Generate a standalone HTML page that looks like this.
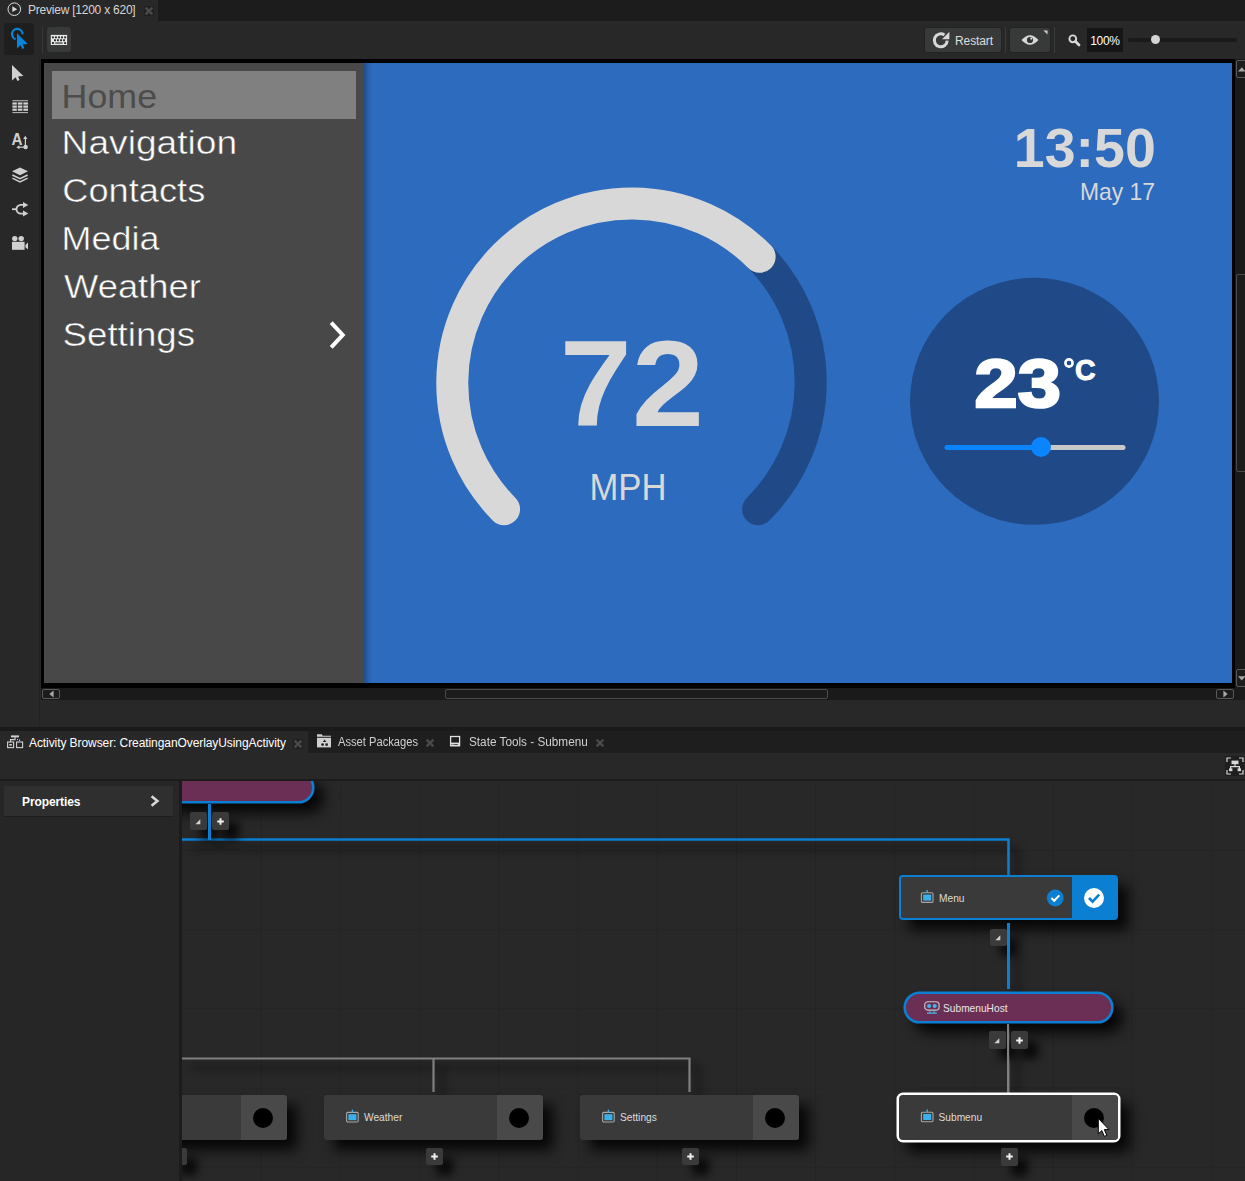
<!DOCTYPE html>
<html>
<head>
<meta charset="utf-8">
<title>Preview</title>
<style>
html,body{margin:0;padding:0;}
body{width:1245px;height:1181px;overflow:hidden;background:#282828;position:relative;font-family:"Liberation Sans",sans-serif;font-size:12px;color:#dcdcdc;}
.a{position:absolute;}
.t{position:absolute;white-space:nowrap;line-height:1;}
svg{position:absolute;overflow:visible;}
.sbtn{position:absolute;background:#3a3a3a;border-radius:2px;box-shadow:10px 10px 9px rgba(0,0,0,.75);}
.node{position:absolute;width:219px;height:45px;background:#3a3a3a;border-radius:3px;box-shadow:10px 10px 13px rgba(0,0,0,.85);}
.node .r{position:absolute;right:0;top:0;width:46px;height:45px;background:#494949;border-radius:0 3px 3px 0;}
.node .c{position:absolute;right:14px;top:12.5px;width:20px;height:20px;border-radius:50%;background:#000;}
.node .lbl{position:absolute;left:40px;top:17.5px;font-size:10.2px;line-height:1;color:#dcdcdc;white-space:nowrap;}
.pill{position:absolute;width:205px;height:27px;border-radius:14px;background:#6b2f55;box-shadow:0 0 0 2.6px #0b7fd1,10px 10px 13px 2px rgba(0,0,0,.85);}
</style>
</head>
<body>

<!-- ===== top tab bar ===== -->
<div class="a" style="left:0;top:0;width:1245px;height:21px;background:#1c1c1c;"></div>
<div class="a" style="left:0;top:0;width:158px;height:21px;background:#282828;"></div>
<svg style="left:7px;top:2px" width="15" height="15" viewBox="0 0 15 15"><circle cx="7.3" cy="7.2" r="6.3" fill="none" stroke="#e0e0e0" stroke-width="1"/><path d="M5.3 4.3 L10.2 7.2 L5.3 10.1 Z" fill="#d8d8d8"/></svg>
<div class="t" style="left:28px;top:4px;font-size:12px;color:#d6d6d6;letter-spacing:-0.23px;">Preview [1200 x 620]</div>
<div class="a" style="left:144px;top:6px;width:10px;height:10px;background:#202020;"></div>
<svg style="left:145px;top:7px" width="8" height="8" viewBox="0 0 8 8"><path d="M0.6 0.6 L7.4 7.4 M7.4 0.6 L0.6 7.4" stroke="#4a4a4a" stroke-width="2.3"/></svg>

<!-- ===== top toolbar ===== -->
<div class="a" style="left:4px;top:23px;width:30px;height:32px;background:#1e1e1e;border-radius:3px;"></div>
<div class="a" style="left:42px;top:27px;width:1px;height:26px;background:#3a3a3a;"></div>
<div class="a" style="left:47px;top:27px;width:24px;height:25px;background:#383a3a;border-radius:3px;"></div>

<!-- interact tool icon (blue) -->
<svg style="left:4px;top:23px" width="30" height="32" viewBox="0 0 30 32">
  <path d="M11.6 16.2 A5.3 5.3 0 1 1 18.6 11.2" fill="none" stroke="#0a84d8" stroke-width="2.2"/>
  <path d="M13 10.3 L13 25.6 L16.6 22.3 L18.3 25.9 L20.4 24.9 L18.8 21.5 L23.8 21 Z" fill="#0a84d8"/>
</svg>
<!-- keyboard icon -->
<svg style="left:47px;top:27px" width="24" height="25" viewBox="0 0 24 25">
  <rect x="3.8" y="7.9" width="16.3" height="10.1" fill="#e8e8e8"/>
  <g fill="#252525">
    <rect x="5" y="9.4" width="1.9" height="1.9"/><rect x="8" y="9.4" width="1.9" height="1.9"/><rect x="11.1" y="9.4" width="1.9" height="1.9"/><rect x="14.1" y="9.4" width="1.9" height="1.9"/><rect x="17.2" y="9.4" width="1.9" height="1.9"/>
    <rect x="7" y="12.3" width="1.9" height="1.9"/><rect x="10" y="12.3" width="1.9" height="1.9"/><rect x="13.1" y="12.3" width="1.9" height="1.9"/><rect x="16.1" y="12.3" width="1.9" height="1.9"/>
    <rect x="5" y="15.1" width="1.9" height="1.9"/><rect x="8.2" y="15.5" width="7.5" height="1.1"/><rect x="17.2" y="15.1" width="1.9" height="1.9"/>
  </g>
</svg>

<!-- right toolbar -->
<div class="a" style="left:925px;top:28px;width:76px;height:24px;background:#383a3a;border-radius:2px;box-shadow:0 0 0 1px #222323;"></div>
<svg style="left:930px;top:30px" width="22" height="20" viewBox="930 30 22 20">
  <path d="M947.2 40.6 A6.45 6.45 0 1 1 944.4 35" fill="none" stroke="#d8d8d8" stroke-width="3"/>
  <path d="M949.4 31.7 V39.3 H942 Z" fill="#d8d8d8"/>
</svg>
<div class="t" style="left:955px;top:35px;font-size:12px;color:#dedede;letter-spacing:-0.1px;">Restart</div>
<div class="a" style="left:1005px;top:27px;width:1px;height:26px;background:#3a3a3a;"></div>
<div class="a" style="left:1010px;top:28px;width:40px;height:24px;background:#383a3a;border-radius:2px;box-shadow:0 0 0 1px #222323;"></div>
<svg style="left:1019px;top:33px" width="22" height="14" viewBox="0 0 22 14">
  <path d="M2.5 7 Q11 -2.5 19.5 7 Q11 16.5 2.5 7 Z" fill="#d8d8d8"/>
  <circle cx="11" cy="7" r="3.1" fill="#333535"/>
  <circle cx="12.3" cy="5.6" r="1.1" fill="#d8d8d8"/>
</svg>
<svg style="left:1043px;top:30px" width="5" height="5" viewBox="0 0 5 5"><path d="M0.5 0.5 H4.5 V4.5 Z" fill="#d0d0d0"/></svg>
<div class="a" style="left:1054px;top:27px;width:1px;height:26px;background:#3a3a3a;"></div>
<svg style="left:1067px;top:33px" width="14" height="14" viewBox="0 0 14 14">
  <circle cx="5.8" cy="5.8" r="3.4" fill="none" stroke="#d8d8d8" stroke-width="1.9"/>
  <path d="M8.6 8.6 L12 12" stroke="#d8d8d8" stroke-width="2.8" stroke-linecap="round"/>
</svg>
<div class="a" style="left:1087px;top:28px;width:36px;height:24px;background:#161616;"></div>
<div class="t" style="left:1087px;top:35px;width:36px;text-align:center;font-size:12px;color:#ffffff;letter-spacing:-0.3px;">100%</div>
<div class="a" style="left:1128px;top:38px;width:109px;height:4px;background:#1a1a1a;border-radius:2px;"></div>
<div class="a" style="left:1150.5px;top:35px;width:9px;height:9px;background:#d4d4d4;border-radius:50%;"></div>

<!-- ===== left tool column ===== -->
<svg style="left:0;top:59px" width="40" height="200" viewBox="0 59 40 200">
  <!-- arrow -->
  <path d="M12 65 L12 80.5 L15.7 77.3 L17.4 81 L19.6 80 L18 76.4 L23.4 76 Z" fill="#d0d0d0"/>
  <!-- grid -->
  <g fill="#d0d0d0">
    <rect x="12.4" y="100.3" width="15.6" height="0.9"/>
    <rect x="12.4" y="112.2" width="15.6" height="0.9"/>
    <rect x="12.4" y="102.4" width="4.4" height="2.2"/><rect x="17.8" y="102.4" width="4.6" height="2.2"/><rect x="23.4" y="102.4" width="4.6" height="2.2"/>
    <rect x="12.4" y="105.5" width="4.4" height="2.2"/><rect x="17.8" y="105.5" width="4.6" height="2.2"/><rect x="23.4" y="105.5" width="4.6" height="2.2"/>
    <rect x="12.4" y="108.6" width="4.4" height="2.2"/><rect x="17.8" y="108.6" width="4.6" height="2.2"/><rect x="23.4" y="108.6" width="4.6" height="2.2"/>
  </g>
  <!-- A with arrows -->
  <text x="11.6" y="145.4" font-size="16.5" font-weight="bold" fill="#d0d0d0" font-family="Liberation Sans, sans-serif" textLength="11" lengthAdjust="spacingAndGlyphs">A</text>
  <path d="M25.4 137 V146" stroke="#d0d0d0" stroke-width="1.2"/>
  <path d="M23.2 139 L25.3 135.8 L27.4 139 Z" fill="#d0d0d0"/>
  <path d="M18 147.2 H25" stroke="#d0d0d0" stroke-width="1.2"/>
  <path d="M19.4 145.2 L16.4 147.2 L19.4 149.2 Z" fill="#d0d0d0"/>
  <circle cx="25.6" cy="147" r="2.2" fill="#d0d0d0"/>
  <!-- layers -->
  <path d="M20 167.4 L28 171.3 L20 175.2 L12 171.3 Z" fill="#d0d0d0"/>
  <path d="M12.4 175 L20 178.7 L27.6 175 M12.4 178.2 L20 181.9 L27.6 178.2" fill="none" stroke="#d0d0d0" stroke-width="1.5"/>
  <!-- share -->
  <path d="M12 209.2 H16.4" stroke="#d0d0d0" stroke-width="1.8"/>
  <path d="M24 204.9 H20.8 A4.35 4.35 0 0 0 20.8 213.6 H24" fill="none" stroke="#d0d0d0" stroke-width="1.9"/>
  <path d="M23 201.9 L28.3 204.9 L23 207.9 Z" fill="#d0d0d0"/>
  <path d="M23 210.6 L28.3 213.6 L23 216.6 Z" fill="#d0d0d0"/>
  <!-- camera -->
  <circle cx="14.8" cy="238.6" r="2.7" fill="#d0d0d0"/>
  <circle cx="21.2" cy="238.6" r="2.7" fill="#d0d0d0"/>
  <rect x="12" y="241.8" width="12.6" height="8" fill="#d0d0d0"/>
  <path d="M25.4 245 L28 242.6 V249.4 L25.4 247.2 Z" fill="#d0d0d0"/>
</svg>
<div class="a" style="left:39px;top:58px;width:1px;height:669px;background:#222;"></div>

<!-- ===== preview frame ===== -->
<div class="a" style="left:41px;top:59px;width:1194px;height:629px;background:#000;"></div>
<div class="a" style="left:44px;top:63px;width:320px;height:620px;background:#484848;"></div>
<div class="a" style="left:364px;top:63px;width:868px;height:620px;background:#2d6bbf;"></div>

<!-- blue panel left shadow -->
<div class="a" style="left:364px;top:63px;width:8px;height:620px;background:linear-gradient(to right,rgba(0,0,0,.28),rgba(0,0,0,.1) 55%,rgba(0,0,0,0));"></div>
<!-- menu -->
<div class="a" style="left:52px;top:71px;width:304px;height:48px;background:#808080;"></div>
<svg style="left:0;top:0" width="1245" height="700" viewBox="0 0 1245 700" font-family="Liberation Sans, sans-serif">
  <g font-size="34" fill="#ffffff" stroke="#484848" stroke-width="0.5" paint-order="fill stroke">
    <text x="61.6" y="108" fill="#4c4c4c" stroke="none" textLength="95.5" lengthAdjust="spacingAndGlyphs">Home</text>
    <text x="61.6" y="154.4" textLength="175.5" lengthAdjust="spacingAndGlyphs">Navigation</text>
    <text x="62.3" y="202.4" textLength="143" lengthAdjust="spacingAndGlyphs">Contacts</text>
    <text x="61.6" y="250.4" textLength="97.8" lengthAdjust="spacingAndGlyphs">Media</text>
    <text x="64" y="298.4" textLength="136.8" lengthAdjust="spacingAndGlyphs">Weather</text>
    <text x="62.6" y="346.4" textLength="132.4" lengthAdjust="spacingAndGlyphs">Settings</text>
  </g>
  <path d="M331.2 322.6 L342.7 335 L331.2 347.4" fill="none" stroke="#ffffff" stroke-width="4"/>
  <!-- gauge -->
  <path d="M758.1 509.2 A179.6 179.6 0 0 0 759.64 256.76" fill="none" stroke="#1f4a87" stroke-width="32" stroke-linecap="round"/>
  <path d="M504.1 509.2 A179.6 179.6 0 1 1 759.64 256.76" fill="none" stroke="#d8d8d8" stroke-width="32" stroke-linecap="round"/>
  <text transform="translate(631.9,426) scale(1.062,1)" x="0" y="0" font-size="122" font-weight="bold" fill="#d8d8d8" text-anchor="middle">72</text>
  <text x="628" y="500" font-size="36" fill="#d8d8d8" text-anchor="middle" textLength="77" lengthAdjust="spacingAndGlyphs">MPH</text>
  <!-- clock -->
  <text x="1155.8" y="167" font-size="56" font-weight="bold" fill="#d8d8d8" text-anchor="end" textLength="142" lengthAdjust="spacingAndGlyphs">13:50</text>
  <text x="1155" y="200" font-size="24" fill="#d8d8d8" text-anchor="end" textLength="75" lengthAdjust="spacingAndGlyphs">May 17</text>
  <!-- temperature -->
  <ellipse cx="1034.5" cy="401.3" rx="124.5" ry="123.5" fill="#1f4a87"/>
  <text transform="translate(974.6,407) scale(1.14,1)" font-size="68" font-weight="bold" fill="#ffffff" stroke="#ffffff" stroke-width="2.6" stroke-linejoin="miter">23</text>
  <circle cx="1069" cy="363" r="3.6" fill="none" stroke="#ffffff" stroke-width="2.6"/>
  <text transform="translate(1075,380.3) scale(0.95,1)" font-size="30" font-weight="bold" fill="#ffffff" stroke="#ffffff" stroke-width="1">C</text>
  <path d="M947 447.5 H1040" stroke="#0a84ff" stroke-width="5" stroke-linecap="round"/>
  <path d="M1042 447.5 H1123" stroke="#c8c8c8" stroke-width="5" stroke-linecap="round"/>
  <circle cx="1041" cy="447" r="10" fill="#0a84ff"/>
</svg>

<!-- scrollbars -->
<div class="a" style="left:1235px;top:59px;width:10px;height:641px;background:#1a1a1a;"></div>
<div class="a" style="left:41px;top:688px;width:1194px;height:12px;background:#1a1a1a;"></div>

<!-- v scrollbar buttons + thumb -->
<div class="a" style="left:1236px;top:60px;width:12px;height:18px;border:1px solid #5a5a5a;border-radius:2px;box-sizing:border-box;background:#1c1c1c;"></div>
<svg style="left:1238px;top:66.5px" width="7" height="5" viewBox="0 0 7 5"><path d="M0 4.6 L3.8 0.2 L7 4 V4.6 Z" fill="#a8a8a8"/></svg>
<div class="a" style="left:1236px;top:669px;width:12px;height:18px;border:1px solid #5a5a5a;border-radius:2px;box-sizing:border-box;background:#1c1c1c;"></div>
<svg style="left:1238px;top:676px" width="7" height="5" viewBox="0 0 7 5"><path d="M0 0.2 H7 V0.8 L3.8 4.6 Z" fill="#a8a8a8"/></svg>
<div class="a" style="left:1236px;top:274px;width:12px;height:198px;border:1px solid #4a4a4a;border-radius:2px;box-sizing:border-box;background:#1c1c1c;"></div>
<!-- h scrollbar buttons + thumb -->
<div class="a" style="left:42px;top:689px;width:18px;height:10px;border:1px solid #5a5a5a;border-radius:2px;box-sizing:border-box;background:#1c1c1c;"></div>
<svg style="left:49px;top:690px" width="5" height="8" viewBox="0 0 5 8"><path d="M4.6 0.4 V7.6 L0.3 4 Z" fill="#a8a8a8"/></svg>
<div class="a" style="left:1216px;top:689px;width:18px;height:10px;border:1px solid #5a5a5a;border-radius:2px;box-sizing:border-box;background:#1c1c1c;"></div>
<svg style="left:1223px;top:690px" width="5" height="8" viewBox="0 0 5 8"><path d="M0.4 0.4 V7.6 L4.7 4 Z" fill="#a8a8a8"/></svg>
<div class="a" style="left:445px;top:689px;width:383px;height:10px;border:1px solid #4a4a4a;border-radius:2px;box-sizing:border-box;background:#1c1c1c;"></div>

<!-- ===== bottom panel ===== -->
<div class="a" style="left:0;top:727px;width:1245px;height:4px;background:#1a1a1a;"></div>
<div class="a" style="left:0;top:731px;width:1245px;height:22px;background:#1e1e1e;"></div>
<div class="a" style="left:0;top:731px;width:308px;height:22px;background:#282828;border-radius:0 2px 0 0;"></div>
<!-- tab: activity browser -->
<svg style="left:7px;top:735px" width="17" height="14" viewBox="0 0 17 14">
  <rect x="4" y="0.4" width="8" height="2" fill="#d0d0d0"/>
  <path d="M8 2 V4.6 H3.5 V7" fill="none" stroke="#d0d0d0" stroke-width="1.1"/>
  <rect x="0.6" y="7" width="6" height="5.6" fill="none" stroke="#d0d0d0" stroke-width="1.1"/>
  <rect x="2.3" y="9" width="2.6" height="1.6" fill="#d0d0d0"/>
  <rect x="9.6" y="7" width="6" height="5.6" fill="none" stroke="#d0d0d0" stroke-width="1.1"/>
  <path d="M10 4.6 H12.6 M12.6 5 V7" stroke="#d0d0d0" stroke-width="1" stroke-dasharray="1 1"/>
</svg>
<div class="t" id="tab1" style="left:29px;top:737px;font-size:12px;color:#ffffff;letter-spacing:-0.08px;">Activity Browser: CreatinganOverlayUsingActivity</div>
<div class="a" style="left:293px;top:739px;width:10px;height:10px;background:#212121;"></div>
<svg style="left:294px;top:740px" width="8" height="8" viewBox="0 0 8 8"><path d="M0.6 0.6 L7.4 7.4 M7.4 0.6 L0.6 7.4" stroke="#4a4a4a" stroke-width="2.3"/></svg>
<!-- tab: asset packages -->
<svg style="left:317px;top:734px" width="15" height="14" viewBox="0 0 15 14">
  <path d="M0 0.3 H4.6 L5.8 1.8 H14 V2.8 H0 Z" fill="#d0d0d0"/>
  <rect x="0" y="3.8" width="14" height="9.6" fill="#d0d0d0"/>
  <path d="M7.6 5.4 L9.3 8 H5.9 Z" fill="#1c1c1c"/>
  <circle cx="5.6" cy="10.6" r="1.3" fill="#1c1c1c"/>
  <rect x="8.4" y="9.4" width="2.4" height="2.4" fill="#1c1c1c"/>
</svg>
<div class="t" id="tab2" style="left:338px;top:736px;font-size:12px;color:#d0d0d0;transform:scaleX(0.93);transform-origin:0 0;">Asset Packages</div>
<svg style="left:426px;top:739px" width="8" height="8" viewBox="0 0 8 8"><path d="M0.6 0.6 L7.4 7.4 M7.4 0.6 L0.6 7.4" stroke="#4a4a4a" stroke-width="2.3"/></svg>
<!-- tab: state tools -->
<svg style="left:450px;top:736px" width="11" height="11" viewBox="0 0 11 11">
  <rect x="0.6" y="0.5" width="9" height="9.2" fill="none" stroke="#e0e0e0" stroke-width="1.3"/>
  <rect x="0.2" y="6.6" width="9.8" height="3.6" fill="#e0e0e0"/>
  <rect x="1.4" y="8" width="1" height="0.9" fill="#1e1e1e"/>
  <rect x="3.4" y="8.1" width="4.6" height="0.7" fill="#1e1e1e"/>
</svg>
<div class="t" id="tab3" style="left:469px;top:736px;font-size:12px;color:#d0d0d0;transform:scaleX(0.98);transform-origin:0 0;">State Tools - Submenu</div>
<svg style="left:596px;top:739px" width="8" height="8" viewBox="0 0 8 8"><path d="M0.6 0.6 L7.4 7.4 M7.4 0.6 L0.6 7.4" stroke="#4a4a4a" stroke-width="2.3"/></svg>

<!-- fit-to-view button -->
<div class="a" style="left:1225px;top:756px;width:19px;height:20px;background:#1e1e1e;border-radius:2px;"></div>
<svg style="left:1226px;top:757px" width="18" height="18" viewBox="0 0 18 18">
  <path d="M1 5 V1 H5 M13 1 H17 V5 M17 13 V17 H13 M5 17 H1 V13" fill="none" stroke="#d8d8d8" stroke-width="1.2"/>
  <rect x="5.5" y="3.6" width="7" height="3.6" fill="#d8d8d8"/>
  <path d="M9 7 V9.6 M4.6 12 V9.6 H13.4 V12" fill="none" stroke="#d8d8d8" stroke-width="1.2"/>
  <rect x="3" y="11.4" width="3.4" height="2.8" fill="#d8d8d8"/>
  <rect x="11.6" y="11.4" width="3.4" height="2.8" fill="#d8d8d8"/>
</svg>

<!-- properties sidebar -->
<div class="a" style="left:0;top:779px;width:1245px;height:2px;background:#1c1c1c;"></div>
<div class="a" style="left:0;top:781px;width:179px;height:400px;background:#262626;"></div>
<div class="a" style="left:179px;top:781px;width:3px;height:400px;background:#1c1c1c;"></div>

<div class="a" style="left:4px;top:786px;width:169px;height:30px;background:#2f2f2f;border-bottom:1px solid #1e1e1e;"></div>
<div class="t" style="left:22px;top:796px;font-size:12px;font-weight:bold;color:#ffffff;letter-spacing:-0.1px;">Properties</div>
<svg style="left:150px;top:795px" width="10" height="12" viewBox="0 0 10 12"><path d="M1.6 1.2 L7.4 6 L1.6 10.8" fill="none" stroke="#d8d8d8" stroke-width="2.6"/></svg>

<!-- graph canvas: coordinates inside are page coords minus (182,781) -->
<div id="graph" class="a" style="left:182px;top:781px;width:1063px;height:400px;background:#282828;overflow:hidden;">
 <div class="a" style="left:-182px;top:-781px;width:1245px;height:1181px;">
  <!-- grid -->
  <div class="a" style="left:182px;top:781px;width:1063px;height:400px;background-image:linear-gradient(to right,#242424 1px,transparent 1px),linear-gradient(to bottom,#242424 1px,transparent 1px);background-size:79.2px 79.2px;background-position:-0.4px -10.2px;"></div>

  <!-- connector shadows + lines -->
  <svg style="left:0;top:0" width="1245" height="1181" viewBox="0 0 1245 1181">
        <g transform="translate(9,9)" style="filter:blur(4px)" fill="none" stroke="#000" stroke-opacity=".55" stroke-width="3">
      <path d="M209.5 804 V839.5 M182 839.5 H1008.5 V876 M1008.5 920 V992 M1008.5 1024 V1093"/>
      <path d="M182 1058.5 H689.5 V1092 M433.5 1058.5 V1092"/>
    </g>
    <path d="M209.5 804 V839.5 M181 839.5 H1008.5 V876 M1008.5 923 V989" fill="none" stroke="#0b7fd1" stroke-width="2.6" stroke-linejoin="miter"/>
    <path d="M1008.3 1024 V1093" fill="none" stroke="#808080" stroke-width="2.4"/>
    <path d="M181 1058.5 H689.5 V1092 M433.5 1058.5 V1092" fill="none" stroke="#808080" stroke-width="2.2"/>
  </svg>

  <!-- top-left pill (clipped) -->
  <div class="pill" style="left:107px;top:774px;"></div>
  <div class="sbtn" style="left:190px;top:812px;width:17px;height:18px;"></div>
  <div class="sbtn" style="left:212px;top:812px;width:17px;height:18px;"></div>
  <!-- redraw blue vertical over shadow of buttons -->
  <div class="a" style="left:208.2px;top:804px;width:2.6px;height:36px;background:#0b7fd1;"></div>
  <svg style="left:190px;top:812.5px" width="40" height="17" viewBox="0 0 40 17">
    <path d="M10.3 6.3 V11.2 H5.4 Z" fill="#d0d0d0"/>
    <path d="M30.5 5.2 V11.8 M27.2 8.5 H33.8" stroke="#f0f0f0" stroke-width="2"/>
  </svg>

  <!-- Menu node -->
  <div class="node" style="left:899px;top:875px;border:2px solid #0b7fd1;width:215px;height:41px;border-radius:4px;">
    <div class="r" style="background:#0b7fd1;width:44px;height:41px;border-radius:0;"></div>
    <div class="lbl" style="left:38px;top:17.3px;">Menu</div>
  </div>
  <svg style="left:1046px;top:888px" width="60" height="22" viewBox="0 0 60 22">
    <circle cx="9.3" cy="10" r="8.4" fill="#0b7fd1"/>
    <path d="M5.4 10 L8.2 12.8 L13.3 7.4" fill="none" stroke="#ffffff" stroke-width="2"/>
    <circle cx="48" cy="10" r="10" fill="#ffffff"/>
    <path d="M43 10 L46.6 13.6 L53.2 6.6" fill="none" stroke="#0b7fd1" stroke-width="2.7"/>
  </svg>
  <div class="sbtn" style="left:990px;top:929px;width:17px;height:17px;"></div>
  <svg style="left:990px;top:929px" width="17" height="17" viewBox="0 0 17 17"><path d="M10.3 6.3 V11.2 H5.4 Z" fill="#d0d0d0"/></svg>
  <div class="a" style="left:1007.2px;top:923px;width:2.6px;height:66px;background:#0b7fd1;"></div>

  <!-- SubmenuHost pill -->
  <div class="pill" style="left:906px;top:994px;"></div>
  <div class="t" style="left:943px;top:1003.5px;font-size:10.2px;color:#e6e6e6;">SubmenuHost</div>
  <svg style="left:923.6px;top:1001.4px" width="16.7" height="13.2" viewBox="0 0 19 15">
    <rect x="0.8" y="0.8" width="16.4" height="9.6" rx="3.6" fill="none" stroke="#c8c8c8" stroke-width="1.3"/>
    <circle cx="5.8" cy="5.6" r="2.3" fill="#48b4e6"/>
    <circle cx="12.2" cy="5.6" r="2.3" fill="#48b4e6"/>
    <path d="M6.6 10.6 V13.4 M11.4 10.6 V13.4 M3.4 13.8 H14.6" stroke="#48b4e6" stroke-width="1.2"/>
  </svg>
  <div class="sbtn" style="left:989px;top:1031px;width:17px;height:18px;"></div>
  <div class="sbtn" style="left:1011px;top:1031px;width:17px;height:18px;"></div>
  <div class="a" style="left:1007.1px;top:1024px;width:2.4px;height:69px;background:#808080;"></div>
  <svg style="left:989px;top:1031.5px" width="40" height="17" viewBox="0 0 40 17">
    <path d="M10.3 6.3 V11.2 H5.4 Z" fill="#d0d0d0"/>
    <path d="M30.5 5.2 V11.8 M27.2 8.5 H33.8" stroke="#f0f0f0" stroke-width="2"/>
  </svg>

  <!-- Submenu node (selected) -->
  <div class="node" style="left:899px;top:1095px;width:219px;height:45px;border-radius:4px;box-shadow:0 0 0 2.5px #ffffff,10px 10px 13px 2px rgba(0,0,0,.85);">
    <div class="r" style="width:46px;height:45px;border-radius:0 4px 4px 0;"></div>
    <div class="c" style="left:auto;right:13.8px;top:12.5px;width:20px;height:20px;"></div>
    <div class="lbl" style="left:39.5px;top:18px;">Submenu</div>
  </div>
  <div class="sbtn" style="left:1001px;top:1148px;width:17px;height:18px;"></div>
  <svg style="left:1001px;top:1148px" width="17" height="17" viewBox="0 0 17 17"><path d="M8.5 5.2 V11.8 M5.2 8.5 H11.8" stroke="#f0f0f0" stroke-width="2"/></svg>

  <!-- bottom row -->
  <div class="node" style="left:68px;top:1095px;"><div class="r"></div><div class="c"></div></div>
  <div class="node" style="left:324px;top:1095px;"><div class="r"></div><div class="c"></div><div class="lbl">Weather</div></div>
  <div class="node" style="left:580px;top:1095px;"><div class="r"></div><div class="c"></div><div class="lbl">Settings</div></div>
  <div class="sbtn" style="left:170px;top:1148px;width:17px;height:17px;"></div>
  <div class="sbtn" style="left:426px;top:1148px;width:17px;height:17px;"></div>
  <div class="sbtn" style="left:682px;top:1148px;width:17px;height:17px;"></div>
  <svg style="left:426px;top:1148px" width="17" height="17" viewBox="0 0 17 17"><path d="M8.5 5.2 V11.8 M5.2 8.5 H11.8" stroke="#f0f0f0" stroke-width="2"/></svg>
  <svg style="left:682px;top:1148px" width="17" height="17" viewBox="0 0 17 17"><path d="M8.5 5.2 V11.8 M5.2 8.5 H11.8" stroke="#f0f0f0" stroke-width="2"/></svg>

  <!-- node icons -->
  <svg style="left:0;top:0" width="1245" height="1181" viewBox="0 0 1245 1181">
    
    <g transform="translate(920.8,890)"><rect x="0.6" y="2.8" width="11.6" height="9.6" rx="1.2" fill="none" stroke="#a8a8a8" stroke-width="1.1"/><rect x="2.4" y="4.6" width="8" height="6" fill="#3cb0ea"/><rect x="5.7" y="0" width="1.4" height="3" fill="#3cb0ea"/></g>
    <g transform="translate(920.8,1109.4)"><rect x="0.6" y="2.8" width="11.6" height="9.6" rx="1.2" fill="none" stroke="#a8a8a8" stroke-width="1.1"/><rect x="2.4" y="4.6" width="8" height="6" fill="#3cb0ea"/><rect x="5.7" y="0" width="1.4" height="3" fill="#3cb0ea"/></g>
    <g transform="translate(346,1109.6)"><rect x="0.6" y="2.8" width="11.6" height="9.6" rx="1.2" fill="none" stroke="#a8a8a8" stroke-width="1.1"/><rect x="2.4" y="4.6" width="8" height="6" fill="#3cb0ea"/><rect x="5.7" y="0" width="1.4" height="3" fill="#3cb0ea"/></g>
    <g transform="translate(602,1109.6)"><rect x="0.6" y="2.8" width="11.6" height="9.6" rx="1.2" fill="none" stroke="#a8a8a8" stroke-width="1.1"/><rect x="2.4" y="4.6" width="8" height="6" fill="#3cb0ea"/><rect x="5.7" y="0" width="1.4" height="3" fill="#3cb0ea"/></g>
    <!-- mouse cursor -->
    <path transform="translate(-1.2,-1.2)" d="M1099.5 1119.5 V1135 L1103 1131.8 L1105.6 1137.6 L1108 1136.5 L1105.5 1130.8 H1110.2 Z" fill="#ffffff" stroke="#000000" stroke-width="1"/>
  </svg>
 </div>
</div>

</body>
</html>
